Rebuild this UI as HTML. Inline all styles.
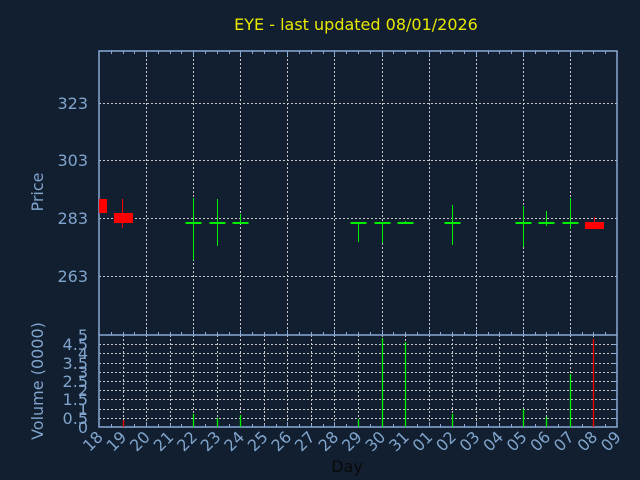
<!DOCTYPE html>
<html><head><meta charset="utf-8"><style>
html,body{margin:0;padding:0;background:#111f30;}
svg{display:block}
text{font-family:"DejaVu Sans","Liberation Sans",sans-serif;}
</style></head><body>
<svg id="s" width="640" height="480" viewBox="0 0 640 480" xmlns="http://www.w3.org/2000/svg">
<rect width="640" height="480" fill="#111f30"/>
<g id="grid"></g>
<text x="356" y="30" font-size="16" fill="#e8e800" text-anchor="middle">EYE - last updated 08/01/2026</text>
<g font-size="16" fill="#80a4cc" text-anchor="end">
<text x="88" y="109">323</text>
<text x="88" y="166">303</text>
<text x="88" y="224">283</text>
<text x="88" y="282">263</text>
</g>
<text transform="translate(43,192) rotate(-90)" font-size="16" fill="#80a4cc" text-anchor="middle">Price</text>
<text transform="translate(43,381) rotate(-90)" font-size="16" fill="#80a4cc" text-anchor="middle">Volume (0000)</text>
<g font-size="16" fill="#80a4cc" text-anchor="end">
<text x="88" y="433">0</text>
<text x="88" y="424">0.5</text>
<text x="88" y="415">1</text>
<text x="88" y="405">1.5</text>
<text x="88" y="396">2</text>
<text x="88" y="387">2.5</text>
<text x="88" y="378">3</text>
<text x="88" y="369">3.5</text>
<text x="88" y="359">4</text>
<text x="88" y="350">4.5</text>
<text x="88" y="341">5</text>
</g>
<g font-size="16" fill="#80a4cc" text-anchor="end">
<text transform="translate(104,438) rotate(-45)">18</text>
<text transform="translate(127.5,438) rotate(-45)">19</text>
<text transform="translate(151,438) rotate(-45)">20</text>
<text transform="translate(174.6,438) rotate(-45)">21</text>
<text transform="translate(198.2,438) rotate(-45)">22</text>
<text transform="translate(221.7,438) rotate(-45)">23</text>
<text transform="translate(245.3,438) rotate(-45)">24</text>
<text transform="translate(268.8,438) rotate(-45)">25</text>
<text transform="translate(292.4,438) rotate(-45)">26</text>
<text transform="translate(315.9,438) rotate(-45)">27</text>
<text transform="translate(339.5,438) rotate(-45)">28</text>
<text transform="translate(363,438) rotate(-45)">29</text>
<text transform="translate(386.5,438) rotate(-45)">30</text>
<text transform="translate(410.1,438) rotate(-45)">31</text>
<text transform="translate(433.6,438) rotate(-45)">01</text>
<text transform="translate(457.2,438) rotate(-45)">02</text>
<text transform="translate(480.7,438) rotate(-45)">03</text>
<text transform="translate(504.3,438) rotate(-45)">04</text>
<text transform="translate(527.8,438) rotate(-45)">05</text>
<text transform="translate(551.4,438) rotate(-45)">06</text>
<text transform="translate(574.9,438) rotate(-45)">07</text>
<text transform="translate(598.5,438) rotate(-45)">08</text>
<text transform="translate(622,438) rotate(-45)">09</text>
</g>
<text x="347" y="472" font-size="16" fill="#0a0a0a" text-anchor="middle">Day</text>
<g id="data"></g>
</svg>
<script>
var ns="http://www.w3.org/2000/svg";
function el(p,t,a){var e=document.createElementNS(ns,t);for(var k in a)e.setAttribute(k,a[k]);p.appendChild(e);return e;}
var g=document.getElementById('grid'),d=document.getElementById('data');
var L=99,R=617,step=(R-L)/22;
function X(i){return L+i*step;}
var dash={stroke:"#c8c8c8","stroke-width":1,"stroke-dasharray":"2,2"};
[103,160,218,276].forEach(function(y){el(g,'line',Object.assign({x1:L,x2:R,y1:y+.5,y2:y+.5},dash));});
for(var i=2;i<22;i+=2){var x=Math.round(X(i))+.5;el(g,'line',Object.assign({x1:x,x2:x,y1:51,y2:335},dash));}
for(var k=1;k<10;k++){var y=Math.round(427-k*9.2)+.5;el(g,'line',Object.assign({x1:L,x2:R,y1:y,y2:y},dash));}
for(var i=1;i<22;i++){var x=Math.round(X(i))+.5;el(g,'line',Object.assign({x1:x,x2:x,y1:335,y2:427},dash));}
var ax={stroke:"#8aaad4","stroke-width":1.5,fill:"none"};
el(g,'polyline',Object.assign({points:L+",335 "+L+",51 "+R+",51 "+R+",335"},ax));
el(g,'rect',Object.assign({x:L,y:335,width:R-L,height:92},ax));
for(var j=1;j<44;j++){var x=Math.round(L+j*step/2)+.5;var len=(j%4==0)?5:3;
 el(g,'line',{x1:x,x2:x,y1:51,y2:51+len,stroke:"#8aaad4"});
 [335,427].forEach(function(y){el(g,'line',{x1:x,x2:x,y1:y,y2:y-len,stroke:"#8aaad4"});});}
for(var k=1;k<10;k++){var y=Math.round(427-k*9.2)+.5;el(g,'line',{x1:R-5,x2:R,y1:y,y2:y,stroke:"#8aaad4"});}
function green(i,t,b){var x=Math.round(X(i))+.5;el(d,'line',{x1:x,x2:x,y1:t,y2:b,stroke:"#00ee00","stroke-width":1});el(d,'rect',{x:x-8,y:222,width:16,height:2,fill:"#00ee00"});}
function red(x1,x2,t,b,wt,wb,wx){if(wx){el(d,'line',{x1:wx,x2:wx,y1:wt,y2:wb,stroke:"#ff0000"});}el(d,'rect',{x:x1,y:t,width:x2-x1,height:b-t,fill:"#ff0000"});}
red(99,107,199,213);
red(114,133,213,223,199,228,122.5);
green(4,198,260);green(5,199,246);green(6,214,223);
green(11,222,242);green(12,222,243);green(13,221,224);
green(15,205,245);green(18,206,247);green(19,211,226);green(20,198,229);
red(585,604,222,229,217,222,594.5);
function vb(i,top,c){var x=Math.round(X(i))+.5;el(d,'line',{x1:x,x2:x,y1:top,y2:427,stroke:c,"stroke-width":1.3});}
vb(1,420,"#ee0000");vb(4,414,"#00ee00");vb(5,418,"#00ee00");vb(6,415,"#00ee00");
vb(11,419,"#00ee00");vb(12,338,"#00ee00");vb(13,342,"#00ee00");vb(15,414,"#00ee00");
vb(18,409,"#00ee00");vb(19,417,"#00ee00");vb(20,374,"#00ee00");vb(21,339,"#ee0000");
</script>
</body></html>
